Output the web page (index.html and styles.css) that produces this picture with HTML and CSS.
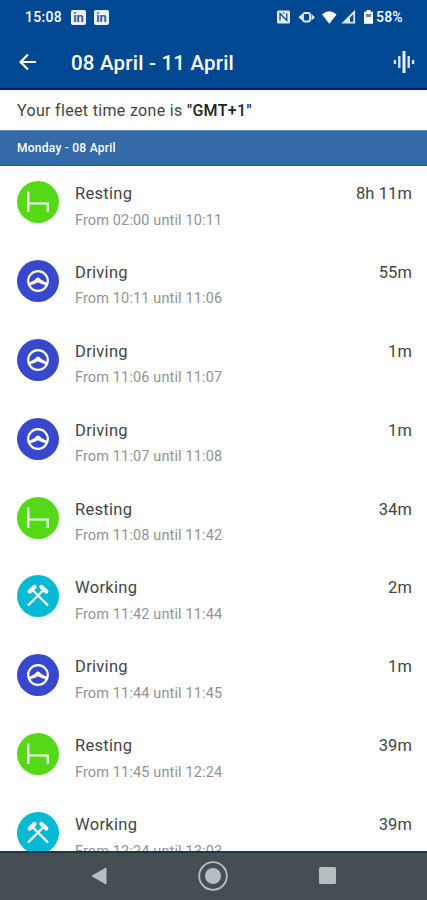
FILE: index.html
```
<!DOCTYPE html>
<html lang="en">
<head>
    <meta charset="UTF-8">
    <meta name="viewport" content="width=device-width, initial-scale=1.0">
    <title>Driver activities</title>
    <link rel="stylesheet" href="styles.css">
</head>
<body>
    <!-- Shared activity icons -->
    <svg class="sprite" aria-hidden="true">
        <symbol id="resting" viewBox="0 0 42 42">
            <path d="M11.3 10.5V31M11.3 22.5h19.4V31" fill="none" stroke="#fff" stroke-width="2.2"/>
        </symbol>
        <symbol id="driving" viewBox="0 0 42 42">
            <circle cx="21" cy="21" r="9.8" fill="none" stroke="#fff" stroke-width="2.2"/>
            <path d="M12 23l6-3.3Q21 15.500 24 19.700l6 3.300-1 2.500-5.500-2L21 22.300l-2.500 1.200L13 25.500z" fill="#fff"/>
        </symbol>
        <symbol id="working" viewBox="0 0 42 42">
            <path d="M15 14.5l16 16M27 14.5l-16 16" stroke="#fff" stroke-width="2.3"/>
            <path d="M12.7 16.5l4.8-4.500M29.300 16.5L24.500 12" stroke="#fff" stroke-width="4.2" stroke-linecap="round"/>
        </symbol>
    </svg>

    <header>
        <div class="status-bar">
            <span class="clock">15:08</span>
            <span class="linkedin">in</span>
            <span class="linkedin">in</span>
            <svg class="status-icons" width="98" height="18" viewBox="0 0 98 18">
                <rect x="1" y="2.5" width="13" height="13" rx="1.5" fill="#e4ebf5"/>
                <path d="M4 12.8V5.5L10.8 12.5V5.2M6.5 5h2" fill="none" stroke="#004891" stroke-width="1.2"/>
                <rect x="27" y="5" width="7" height="8.5" rx="2" fill="none" stroke="#e4ebf5" stroke-width="1.8"/>
                <path d="M26 6v6.5L22.5 9.3zM35.5 6v6.5L39 9.3z" fill="#e4ebf5"/>
                <path d="M46 6.5Q53.3-.2 60.6 6.5L53.3 15.8z" fill="#fff"/>
                <path d="M67.500 14.7L78.200 4v10.700z" fill="none" stroke="#dce6f2" stroke-width="1.8"/>
                <path d="M67 15l7-7v7z" fill="#dce6f2"/>
                <path d="M88 3.7h2.5V2h4v1.7H97v12.1h-9z" fill="#fff"/>
                <path d="M90 6h5v3h-5z" fill="#5c87b8"/>
            </svg>
            <span class="battery">58%</span>
        </div>
        <div class="app-bar">
            <svg class="back" width="18" height="18" viewBox="0 0 18 18">
                <path d="M17 9H2M9 1.5L1.5 9 9 16.5" fill="none" stroke="#fff" stroke-width="2.2"/>
            </svg>
            <h1>08 April - 11 April</h1>
            <svg class="wave" width="22" height="24" viewBox="0 0 22 24">
                <path d="M1.9 10v4M6.3 6v12M15.7 6v12M20.1 10v4" stroke="#d5e2f0" stroke-width="2.4"/>
                <path d="M11 1v22" stroke="#e8f0f8" stroke-width="3"/>
            </svg>
        </div>
    </header>

    <p class="timezone">Your fleet time zone is <b>"GMT+1"</b></p>
    <h2>Monday - 08 April</h2>

    <main>
        <div class="activity">
            <svg class="icon resting"><use href="#resting"/></svg>
            <div class="details"><h3>Resting</h3><p>From 02:00 until 10:11</p></div>
            <span class="duration">8h 11m</span>
        </div>
        <div class="activity">
            <svg class="icon driving"><use href="#driving"/></svg>
            <div class="details"><h3>Driving</h3><p>From 10:11 until 11:06</p></div>
            <span class="duration">55m</span>
        </div>
        <div class="activity">
            <svg class="icon driving"><use href="#driving"/></svg>
            <div class="details"><h3>Driving</h3><p>From 11:06 until 11:07</p></div>
            <span class="duration">1m</span>
        </div>
        <div class="activity">
            <svg class="icon driving"><use href="#driving"/></svg>
            <div class="details"><h3>Driving</h3><p>From 11:07 until 11:08</p></div>
            <span class="duration">1m</span>
        </div>
        <div class="activity">
            <svg class="icon resting"><use href="#resting"/></svg>
            <div class="details"><h3>Resting</h3><p>From 11:08 until 11:42</p></div>
            <span class="duration">34m</span>
        </div>
        <div class="activity">
            <svg class="icon working"><use href="#working"/></svg>
            <div class="details"><h3>Working</h3><p>From 11:42 until 11:44</p></div>
            <span class="duration">2m</span>
        </div>
        <div class="activity">
            <svg class="icon driving"><use href="#driving"/></svg>
            <div class="details"><h3>Driving</h3><p>From 11:44 until 11:45</p></div>
            <span class="duration">1m</span>
        </div>
        <div class="activity">
            <svg class="icon resting"><use href="#resting"/></svg>
            <div class="details"><h3>Resting</h3><p>From 11:45 until 12:24</p></div>
            <span class="duration">39m</span>
        </div>
        <div class="activity">
            <svg class="icon working"><use href="#working"/></svg>
            <div class="details"><h3>Working</h3><p>From 12:24 until 13:03</p></div>
            <span class="duration">39m</span>
        </div>
    </main>

    <nav>
        <svg width="16" height="18" viewBox="0 0 16 18"><path d="M15 1v16L1 9z" fill="#b5bec0" stroke="#b5bec0" stroke-linejoin="round"/></svg>
        <svg width="30" height="30" viewBox="0 0 30 30"><circle cx="15" cy="15" r="13.8" fill="none" stroke="#b5bec0" stroke-width="1.8"/><circle cx="15" cy="15" r="8" fill="#b5bec0"/></svg>
        <svg width="17" height="17" viewBox="0 0 17 17"><rect width="17" height="17" rx="1.5" fill="#b5bec0"/></svg>
    </nav>
</body>
</html>
```
FILE: styles.css
```
* {
    box-sizing: border-box;
    margin: 0;
}
body {
    display: flex;
    flex-direction: column;
    height: 900px;
    font-family: Roboto, sans-serif;
    background: #fff;
    color: #444;
    overflow: hidden;
}
.sprite {
    position: absolute;
    width: 0;
    height: 0;
}
header {
    flex: none;
    height: 90px;
    background: #004891;
    border-bottom: 2px solid #001480;
    color: #fff;
}
.status-bar {
    display: flex;
    align-items: center;
    height: 34px;
    padding: 0 22px 0 25px;
}
.clock {
    width: 46px;
    font-size: 14px;
    font-weight: 500;
    letter-spacing: 0.3px;
}
.linkedin {
    width: 15px;
    height: 15px;
    margin-right: 8px;
    border-radius: 2px;
    background: #eef3fa;
    color: #31609c;
    font-size: 13px;
    font-weight: 700;
    line-height: 15px;
    text-align: center;
}
.status-icons {
    margin-left: auto;
}
.battery {
    width: 29px;
    margin-left: 2px;
    font-size: 14px;
    font-weight: 500;
    letter-spacing: 0.2px;
}
.app-bar {
    display: flex;
    align-items: center;
    height: 56px;
    padding: 0 12px 0 19px;
}
h1 {
    margin-left: 34px;
    padding-top: 1px;
    font-size: 20.5px;
    font-weight: 500;
    letter-spacing: 0.2px;
}
.wave {
    margin-left: auto;
}
.timezone {
    flex: none;
    height: 40px;
    padding-left: 17px;
    font-size: 16px;
    line-height: 42px;
    letter-spacing: 0.33px;
}
.timezone b {
    color: #222;
    font-weight: 500;
}
h2 {
    flex: none;
    height: 36px;
    padding-left: 17px;
    background: #336aa7;
    border-top: 1px solid #5c89b8;
    border-bottom: 1px solid #1d5797;
    color: #fff;
    font-size: 12px;
    font-weight: 500;
    line-height: 35px;
    letter-spacing: 0.25px;
}
main {
    flex: 1;
    min-height: 0;
    overflow: hidden;
}
.activity {
    display: flex;
    height: 78.9px;
    padding: 15px 15px 0 17px;
}
.icon {
    flex: none;
    width: 42px;
    height: 42px;
    border-radius: 50%;
}
.resting {
    background: #55d916;
}
.driving {
    background: #3748cc;
}
.working {
    background: #07b9d3;
}
.details {
    flex: 1;
    margin-left: 16px;
}
h3, .duration {
    margin-top: 1px;
    font-size: 16.5px;
    font-weight: 400;
    line-height: 24px;
    letter-spacing: 0.3px;
}
.duration {
    letter-spacing: 0.1px;
}
.details p {
    margin-top: 4.5px;
    color: #929292;
    font-size: 14.5px;
    line-height: 20px;
    letter-spacing: 0.13px;
}
nav {
    display: flex;
    flex: none;
    align-items: center;
    justify-content: space-between;
    height: 49px;
    padding: 0 91px 2px;
    background: #464e54;
    border-top: 2px solid #1d3640;
}
```
